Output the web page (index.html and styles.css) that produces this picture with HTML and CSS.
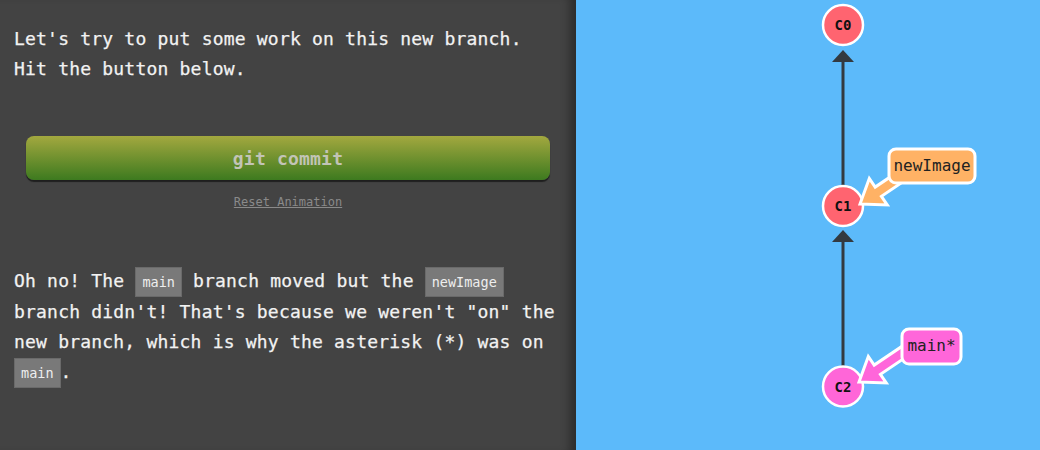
FILE: index.html
```html
<!DOCTYPE html>
<html>
<head>
<meta charset="utf-8">
<link rel="stylesheet" href="styles.css">
</head>
<body>
<div class="app">
  <section class="lesson">
    <p class="text">Let's try to put some work on this new branch. Hit the button below.</p>
    <button class="commit-btn">git commit</button>
    <div class="reset"><a class="reset-link">Reset Animation</a></div>
    <p class="text second">Oh no! The <code class="chip">main</code> branch moved but the <code class="chip">newImage</code> branch didn't! That's because we weren't "on" the new branch, which is why the asterisk (*) was on <code class="chip">main</code>.</p>
  </section>
  <section class="canvas">
    <svg class="graph" viewBox="576 0 464 450" width="464" height="450">
      <g class="edge">
        <line x1="843" y1="60" x2="843" y2="185"/>
        <polygon points="843,50 854,62 832,62"/>
        <line x1="843" y1="240" x2="843" y2="366"/>
        <polygon points="843,230 854,242 832,242"/>
      </g>
      <g class="node red">
        <circle cx="843" cy="25" r="20"/>
        <text x="843" y="30">C0</text>
      </g>
      <g class="node red">
        <circle cx="843" cy="206" r="20"/>
        <text x="843" y="211">C1</text>
      </g>
      <g class="node pink">
        <circle cx="843" cy="386.5" r="20"/>
        <text x="843" y="391.5">C2</text>
      </g>
      <g class="label orange">
        <polygon points="860,204 887.3,205 881.4,196.3 914.6,173.9 908.4,164.7 875.2,187.1 869.3,178.4"/>
        <rect x="889" y="149" width="86" height="34" rx="7"/>
        <text x="932" y="171">newImage</text>
      </g>
      <g class="label magenta">
        <polygon transform="translate(-1 178)" points="860,204 887.3,205 881.4,196.3 914.6,173.9 908.4,164.7 875.2,187.1 869.3,178.4"/>
        <rect x="902" y="329" width="59" height="35" rx="7"/>
        <text x="931.5" y="351">main*</text>
      </g>
    </svg>
  </section>
</div>
</body>
</html>
```

FILE: styles.css
```css
html, body {
  margin: 0;
  padding: 0;
}

body {
  width: 1040px;
  height: 450px;
  overflow: hidden;
  font-family: "DejaVu Sans Mono", "Liberation Mono", monospace;
}

.app {
  display: flex;
  width: 1040px;
  height: 450px;
}

.lesson {
  width: 576px;
  flex: none;
  box-sizing: border-box;
  padding: 24px 14px 0;
  background: #434343;
  box-shadow: inset -12px 0 10px -6px rgba(0, 0, 0, 0.35);
  color: #f2f2f2;
}

.text {
  margin: 0;
  font-size: 18px;
  line-height: 30px;
  letter-spacing: 0.2px;
  -webkit-text-stroke: 0.25px #f2f2f2;
}

.second {
  margin-top: 57px;
}

.commit-btn {
  display: block;
  width: calc(100% - 24px);
  height: 44px;
  margin: 52px 12px 0;
  border: none;
  border-radius: 8px;
  background: linear-gradient(#a3a83f, #3d7a1f);
  box-shadow: 0 2px 1px rgba(0, 0, 0, 0.55);
  font-family: inherit;
  font-size: 18px;
  font-weight: bold;
  color: #c2c4b6;
  letter-spacing: 0.2px;
  padding: 0;
}

.reset {
  margin-top: 14px;
  text-align: center;
  line-height: 14px;
}

.reset-link {
  font-size: 12px;
  color: #8a8a8a;
  text-decoration: underline;
}

.chip {
  font-family: inherit;
  font-size: 13.5px;
  letter-spacing: 0;
  -webkit-text-stroke: 0;
  background: #797979;
  border: 1px solid #6a6a6a;
  color: #eeeeee;
  padding: 6px 6px;
}

.canvas {
  flex: 1;
  background: #5cbafa;
}

.graph {
  display: block;
}

.edge line {
  stroke: #333a40;
  stroke-width: 3;
}

.edge polygon {
  fill: #333a40;
}

.node circle {
  stroke: #ffffff;
  stroke-width: 2.5;
}

.node.red circle {
  fill: #ff6470;
}

.node.pink circle {
  fill: #ff66d8;
}

.node text {
  font-family: "DejaVu Sans Mono", monospace;
  font-size: 14px;
  font-weight: bold;
  fill: #111;
  text-anchor: middle;
}

.label polygon,
.label rect {
  stroke: #ffffff;
  stroke-width: 3;
}

.label.orange polygon,
.label.orange rect {
  fill: #ffb265;
}

.label.magenta polygon,
.label.magenta rect {
  fill: #ff66da;
}

.label text {
  font-family: "DejaVu Sans Mono", monospace;
  font-size: 16px;
  fill: #222;
  text-anchor: middle;
}
```
